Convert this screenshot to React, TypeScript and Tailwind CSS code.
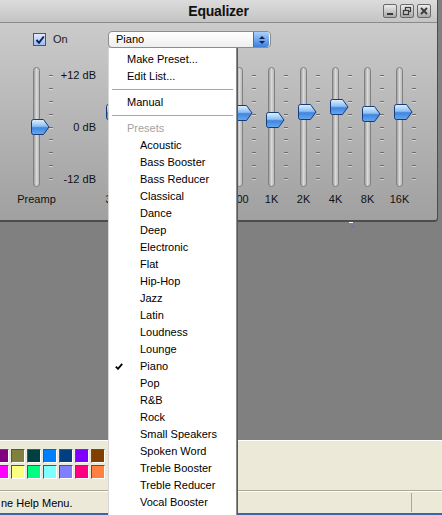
import React from "react";

const BANDS = [
  { label: "32", y: 112 },
  { label: "64", y: 110, hidden: true },
  { label: "125", y: 108, hidden: true },
  { label: "250", y: 111, hidden: true },
  { label: "500", y: 113 },
  { label: "1K", y: 120 },
  { label: "2K", y: 112 },
  { label: "4K", y: 107 },
  { label: "8K", y: 114 },
  { label: "16K", y: 112 },
];

const PRESETS = [
  "Acoustic", "Bass Booster", "Bass Reducer", "Classical", "Dance", "Deep",
  "Electronic", "Flat", "Hip-Hop", "Jazz", "Latin", "Loudness", "Lounge",
  "Piano", "Pop", "R&B", "Rock", "Small Speakers", "Spoken Word",
  "Treble Booster", "Treble Reducer", "Vocal Booster",
];

const PALETTE = [
  ["#800080", "#808040", "#004040", "#0080ff", "#004080", "#8000ff", "#804000"],
  ["#ff00ff", "#ffff80", "#00ff80", "#80ffff", "#8080ff", "#ff0080", "#ff8040"],
];

// track top sits at y=67 in the page
const TRACK_TOP = 67;

function Thumb({ y }: { y: number }) {
  return (
    <svg
      className="absolute left-[5px]"
      style={{ top: y - 8 - TRACK_TOP }}
      width="19"
      height="16"
      viewBox="0 0 19 16"
    >
      <defs>
        <linearGradient id="thumbFill" x1="0" y1="0" x2="0" y2="1">
          <stop offset="0" stopColor="#e4f1ff" />
          <stop offset="0.45" stopColor="#8cc0f4" />
          <stop offset="0.55" stopColor="#3f86e0" />
          <stop offset="1" stopColor="#6aa8f0" />
        </linearGradient>
      </defs>
      <path
        d="M2.5 0.5 H12.5 L18 8 L12.5 15.5 H2.5 Q0.5 15.5 0.5 13.5 V2.5 Q0.5 0.5 2.5 0.5 Z"
        fill="url(#thumbFill)"
        stroke="#153c78"
        strokeWidth="1"
      />
    </svg>
  );
}

function Slider({ label, y, hidden }: { label: string; y: number; hidden?: boolean }) {
  return (
    <div className="flex w-[32px] flex-col">
      <div className="relative flex h-[120px]">
        <div className="ml-[7px] h-full w-[7px] rounded-full border border-[#808080] bg-linear-to-r from-[#a0a0a0] via-[#dadada] to-[#b8b8b8]" />
        <div className="ml-[9px] flex flex-col justify-between py-[8px]">
          {Array.from({ length: 9 }).map((_, i) => (
            <div key={i} className="h-px w-[4px] bg-[#6c6c6c] shadow-[0_1px_0_rgba(255,255,255,0.45)]" />
          ))}
        </div>
        <Thumb y={y} />
      </div>
      <div
        className={
          "mt-[6px] flex w-[21px] justify-center whitespace-nowrap leading-[13px] text-[#111]" +
          (hidden ? " invisible" : "")
        }
      >
        {label}
      </div>
    </div>
  );
}

function TitleButton({ kind }: { kind: "min" | "max" | "close" }) {
  return (
    <div className="flex h-[14px] w-[14px] items-center justify-center rounded-[2px] border border-[#6a6a6a] bg-linear-to-b from-[#ececec] to-[#a9a9a9]">
      <svg width="10" height="10" viewBox="0 0 10 10">
        {kind === "min" && <rect x="2" y="7" width="6" height="2" fill="#3a3a3a" />}
        {kind === "max" && (
          <g fill="none" stroke="#3a3a3a" strokeWidth="1.2">
            <rect x="3.5" y="1.5" width="5" height="4" />
            <rect x="1.5" y="4.5" width="5" height="4" fill="#c8c8c8" />
          </g>
        )}
        {kind === "close" && (
          <path d="M2 2 L8 8 M8 2 L2 8" stroke="#3a3a3a" strokeWidth="1.8" />
        )}
      </svg>
    </div>
  );
}

export default function App() {
  return (
    <div className="relative flex h-[515px] w-[442px] flex-col overflow-hidden bg-[#808080] font-['Liberation_Sans',Arial,sans-serif] text-[11px] text-black">
      {/* equalizer window */}
      <div className="flex h-[222px] w-[438px] flex-col rounded-br-[4px] border-r border-b-2 border-[#4c4c4c] bg-linear-to-b from-[#d0d0d0] to-[#a0a0a0]">
        <div className="flex h-[23px] items-center border-b border-[#8a8a8a] bg-linear-to-b from-[#dcdcdc] to-[#c4c4c4]">
          <div className="w-[54px]" />
          <div className="flex-1 text-center text-[14px] font-bold tracking-[-0.2px] text-[#111]">Equalizer</div>
          <div className="flex gap-[3px] pr-[6px]">
            <TitleButton kind="min" />
            <TitleButton kind="max" />
            <TitleButton kind="close" />
          </div>
        </div>

        <div className="flex flex-col pt-[8px]">
          <div className="flex h-[17px] items-center pl-[33px]">
            <div className="flex w-[75px] items-center">
              <div className="flex h-[13px] w-[13px] items-center justify-center border border-[#2b5aa6] bg-linear-to-b from-[#e2ecfb] to-[#9dbdeb]">
                <svg width="10" height="10" viewBox="0 0 10 10">
                  <path d="M1.5 5 L4 7.8 L8.8 1.5" fill="none" stroke="#0e1f66" strokeWidth="2" />
                </svg>
              </div>
              <span className="ml-[7px] text-[#222]">On</span>
            </div>
            <div className="flex h-[17px] w-[163px] items-center rounded-[4px] border border-[#8c8c8c] bg-linear-to-b from-white to-[#eeeeee]">
              <span className="flex-1 pl-[7px]">Piano</span>
              <div className="mr-px flex h-[15px] w-[16px] flex-col items-center justify-center gap-[2px] rounded-r-[3px] border-l border-[#3d6fb8] bg-linear-to-b from-[#a9d0fa] to-[#3d7fdc]">
                <svg width="6" height="3" viewBox="0 0 6 3"><path d="M0 3 L3 0 L6 3 Z" fill="#0f2350" /></svg>
                <svg width="6" height="3" viewBox="0 0 6 3"><path d="M0 0 L3 3 L6 0 Z" fill="#0f2350" /></svg>
              </div>
            </div>
          </div>

          <div className="mt-[19px] flex pl-[26px]">
            <Slider label="Preamp" y={127} />
            <div className="flex h-[120px] w-[43px] flex-col items-end justify-between pr-[5px] pt-[2px] pb-px leading-[13px] text-[#111]">
              <span>+12 dB</span>
              <span>0 dB</span>
              <span>-12 dB</span>
            </div>
            {BANDS.map((b) => (
              <Slider key={b.label} label={b.label} y={b.y} hidden={b.hidden} />
            ))}
          </div>
        </div>
      </div>

      {/* grey canvas */}
      <div className="relative h-[218px]">
        <div className="ml-[349px] h-px w-[4px] bg-white" />
        <div className="ml-[351px] mt-[2px] h-[3px] w-[3px] rounded-full bg-[#5b78c8]" />
      </div>

      {/* paint palette + status bar */}
      <div className="flex h-[75px] flex-col border-t border-white bg-[#ece9d8]">
        <div className="ml-[-5px] mt-[8px] flex flex-col gap-[2px]">
          {PALETTE.map((row, r) => (
            <div key={r} className="flex gap-[2px]">
              {row.map((c) => (
                <div
                  key={c}
                  className="h-[14px] w-[14px] border border-t-[#55534a] border-l-[#55534a] border-r-white border-b-white"
                  style={{ backgroundColor: c }}
                />
              ))}
            </div>
          ))}
        </div>
        <div className="mt-[11px] h-px bg-[#aca899]" />
        <div className="h-px bg-white" />
        <div className="flex h-[21px] items-center">
          <span className="flex-1 pl-px pt-[2px]">ne Help Menu.</span>
          <div className="mr-[29px] h-[19px] w-[2px] border-l border-[#aca899] border-r-white" />
        </div>
        <div className="h-[2px] bg-[#3e64a8]" />
      </div>

      {/* open preset menu */}
      <div className="absolute left-[108px] top-[48px] flex h-[467px] w-[129px] flex-col border-l border-r border-l-[#d6d6d6] border-r-[#8c8c8c] bg-white pt-[3px] shadow-[1px_0_0_#5a5a5a]">
        <div className="h-[17px] pl-[18px] leading-[17px]">Make Preset...</div>
        <div className="h-[17px] pl-[18px] leading-[17px]">Edit List...</div>
        <div className="flex h-[9px] items-center px-[3px]"><div className="h-px w-full bg-[#a6a6a6]" /></div>
        <div className="h-[17px] pl-[18px] leading-[17px]">Manual</div>
        <div className="flex h-[9px] items-center px-[3px]"><div className="h-px w-full bg-[#a6a6a6]" /></div>
        <div className="h-[17px] pl-[18px] leading-[17px] text-[#a3a3a3]">Presets</div>
        {PRESETS.map((p) => (
          <div key={p} className="flex h-[17px] items-center leading-[17px]">
            <div className="flex w-[31px] pl-[6px]">
              {p === "Piano" && (
                <svg width="8" height="7" viewBox="0 0 8 7">
                  <path d="M0.8 3.6 L3 5.8 L7.2 0.8" fill="none" stroke="#000" strokeWidth="1.8" />
                </svg>
              )}
            </div>
            <span>{p}</span>
          </div>
        ))}
      </div>
    </div>
  );
}
